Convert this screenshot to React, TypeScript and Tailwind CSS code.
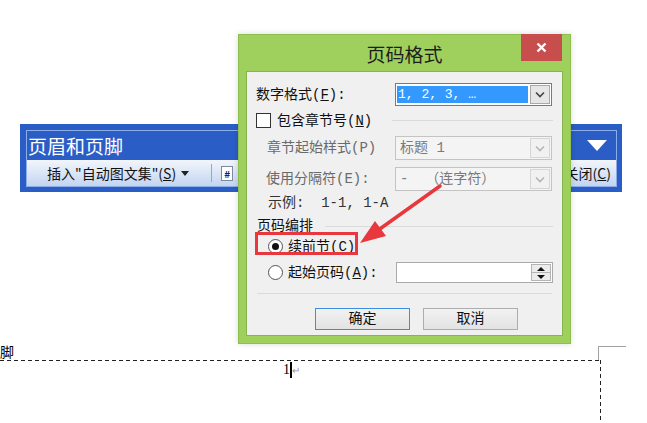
import React from "react";

const cjk = { fontFamily: '"Liberation Mono","Noto Sans CJK SC",monospace' };
const sans = { fontFamily: '"Noto Sans CJK SC","Noto Sans",sans-serif' };

function Chevron({ color = "#6b6b6b" }: { color?: string }) {
  return (
    <svg width="10" height="7" viewBox="0 0 10 7">
      <path d="M1 1.5 L5 5.5 L9 1.5" fill="none" stroke={color} strokeWidth="1.6" />
    </svg>
  );
}

function Select({
  children,
  active = false,
  h = 24,
}: {
  children?: React.ReactNode;
  active?: boolean;
  h?: number;
}) {
  return (
    <div
      className={`flex w-[157px] border ${active ? "border-[#7a7a7a] bg-white" : "border-[#c4c4c4] bg-[#f4f4f4]"}`}
      style={{ height: h }}
    >
      <div className="flex-1 flex items-center pl-[1px] pr-[2px] overflow-hidden">{children}</div>
      <div
        className={`w-[20px] my-[1px] mr-[1px] flex items-center justify-center border ${active ? "border-[#a9a9a9] bg-[#e6e6e6]" : "border-[#d6d6d6] bg-[#f1f1f1]"}`}
      >
        <Chevron color={active ? "#444" : "#b5b5b5"} />
      </div>
    </div>
  );
}

function Radio({ checked }: { checked?: boolean }) {
  return (
    <div className="w-[15px] h-[15px] rounded-full border border-[#555] bg-white flex items-center justify-center">
      {checked && <div className="w-[7px] h-[7px] rounded-full bg-[#111]" />}
    </div>
  );
}

export default function App() {
  return (
    <div className="relative w-[647px] h-[423px] overflow-hidden bg-white" style={sans}>
      {/* Toolbar */}
      <div className="mt-[124px] ml-[20px] w-[602px] h-[68px] bg-[#2b5dc7] pt-[6px] pl-[6px] pr-[5px] pb-[5px]">
        <div className="h-full border border-[#8eaeea] flex flex-col">
          <div className="h-[29px] flex items-center justify-between pl-[1px] pr-[9px]">
            <span className="text-white text-[19px] leading-none">页眉和页脚</span>
            <svg width="20" height="11" viewBox="0 0 20 11">
              <path d="M0 0 L20 0 L10 11 Z" fill="#ffffff" />
            </svg>
          </div>
          <div className="flex-1 flex items-center bg-gradient-to-b from-[#f2f6fc] to-[#c3d5f1] relative">
            <span className="ml-[20px] text-[14px] text-[#111] leading-none">
              插入"自动图文集"(<span className="underline">S</span>)
            </span>
            <svg className="ml-[5px]" width="8" height="5" viewBox="0 0 8 5">
              <path d="M0 0 L8 0 L4 5 Z" fill="#222" />
            </svg>
            <div className="ml-[22px] w-px h-[18px] bg-[#9aa7bb]" />
            <div className="ml-[9px] w-[12px] h-[15px] border border-[#7d8aa0] bg-white text-[10px] leading-[13px] text-[#224] font-bold text-center">
              #
            </div>
            <span className="ml-auto mr-[5px] text-[14px] text-[#111] leading-none">
              关闭(<span className="underline">C</span>)
            </span>
          </div>
        </div>
      </div>

      {/* Page */}
      <div className="mt-[153px] flex items-end h-[15px]">
        <span className="text-[14px] leading-none text-black" style={cjk}>
          脚
        </span>
        <div className="ml-auto mr-[21px] w-[28px] h-[14px] border-l border-t border-[#a0a0a0]" />
      </div>
      <div className="flex h-[70px]">
        <div className="w-[600px] flex flex-col">
          <div className="h-px bg-[repeating-linear-gradient(90deg,#222_0px,#222_4px,transparent_4px,transparent_7px)]" />
          <div className="pl-[283px] pt-[1px] flex items-center h-[16px]">
            <span className="text-[14px] leading-none text-black" style={{ fontFamily: '"Liberation Serif",serif' }}>
              1
            </span>
            <span className="inline-block w-[2px] h-[16px] bg-black" />
            <span className="text-[10px] text-[#999] leading-none">↵</span>
          </div>
        </div>
        <div className="w-px bg-[repeating-linear-gradient(180deg,#222_0px,#222_4px,transparent_4px,transparent_7px)]" />
      </div>

      {/* Dialog */}
      <div className="absolute left-[238px] top-[34px] w-[333px] h-[310px] bg-[#9fd05d] border border-[#8cbf4c] flex flex-col shadow-[0_0_6px_rgba(0,0,0,0.15)]">
        <div className="h-[36px] relative flex items-center justify-center">
          <span className="text-[19px] text-[#1d1d1d] leading-none" style={sans}>
            页码格式
          </span>
          <div className="absolute right-[8px] top-[-1px] w-[41px] h-[27px] bg-[#c84e4e] flex items-center justify-center">
            <svg width="11" height="11" viewBox="0 0 11 11">
              <path d="M1.5 1.5 L9.5 9.5 M9.5 1.5 L1.5 9.5" stroke="#fff" strokeWidth="2.4" />
            </svg>
          </div>
        </div>
        <div className="mx-[7px] mb-[7px] flex-1 bg-[#f0f0f0] border border-[#86b64a] text-[14px] leading-none" style={cjk}>
          {/* row 1 */}
          <div className="mt-[11px] ml-[9px] flex items-center h-[23px]">
            <span className="w-[139px] text-[#111]">
              数字格式(<span className="underline">F</span>):
            </span>
            <Select active h={23}>
              <div className="w-full h-[17px] bg-[#3399ff] text-white text-[13px] leading-[17px] pl-[1px] whitespace-pre">
                1, 2, 3, …
              </div>
            </Select>
          </div>
          {/* row 2 */}
          <div className="mt-[7px] ml-[9px] flex items-center h-[15px]">
            <div className="w-[15px] h-[15px] border border-[#333] bg-white" />
            <span className="ml-[6px] text-[#111]">
              包含章节号(<span className="underline">N</span>)
            </span>
            <div className="ml-auto mr-[9px] w-[161px] border-t border-[#dadada]" />
          </div>
          {/* row 3 */}
          <div className="mt-[8px] ml-[20px] flex items-center h-[24px]">
            <span className="w-[128px] text-[#6a6a6a]">章节起始样式(P)</span>
            <Select>
              <span className="pl-[3px] text-[#7a7a7a]">标题 1</span>
            </Select>
          </div>
          {/* row 4 */}
          <div className="mt-[7px] ml-[19px] flex items-center h-[24px]">
            <span className="w-[129px] text-[#6a6a6a]">使用分隔符(E):</span>
            <Select>
              <span className="pl-[3px] text-[#7a7a7a] whitespace-pre">-  （连字符）</span>
            </Select>
          </div>
          {/* row 5 */}
          <div className="mt-[5px] ml-[21px] h-[14px] flex items-center text-[#333] whitespace-pre">
            示例:  1-1, 1-A
          </div>
          {/* row 6 */}
          <div className="mt-[9px] ml-[10px] h-[14px] flex items-center">
            <span className="text-[#111]">页码编排</span>
            <div className="ml-[12px] mr-[9px] flex-1 border-t border-[#dadada]" />
          </div>
          {/* row 7 */}
          <div className="mt-[6px] ml-[21px] h-[15px] flex items-center">
            <Radio checked />
            <span className="ml-[5px] text-[#111]">续前节(C)</span>
          </div>
          {/* row 8 */}
          <div className="mt-[8px] ml-[21px] h-[21px] flex items-center">
            <Radio />
            <span className="ml-[5px] w-[108px] text-[#111]">
              起始页码(<span className="underline">A</span>):
            </span>
            <div className="w-[157px] h-[21px] border border-[#aaa] bg-white flex justify-end">
              <div className="w-[20px] my-[1px] mr-[1px] border border-[#b4b4b4] bg-[#ececec] flex flex-col">
                <div className="flex-1 flex items-center justify-center border-b border-[#b4b4b4]">
                  <svg width="8" height="4" viewBox="0 0 8 4">
                    <path d="M0 4 L8 4 L4 0 Z" fill="#111" />
                  </svg>
                </div>
                <div className="flex-1 flex items-center justify-center">
                  <svg width="8" height="4" viewBox="0 0 8 4">
                    <path d="M0 0 L8 0 L4 4 Z" fill="#111" />
                  </svg>
                </div>
              </div>
            </div>
          </div>
          {/* separator */}
          <div className="mt-[10px] mx-[10px] border-t border-[#dadada]" />
          {/* buttons */}
          <div className="mt-[14px] flex pl-[68px] gap-[13px]">
            <div className="w-[95px] h-[22px] border border-[#3c8fe0] bg-gradient-to-b from-[#f2f2f2] to-[#e3e3e3] flex items-center justify-center text-[#111]">
              确定
            </div>
            <div className="w-[95px] h-[22px] border border-[#adadad] bg-gradient-to-b from-[#f2f2f2] to-[#e3e3e3] flex items-center justify-center text-[#111]">
              取消
            </div>
          </div>
        </div>
      </div>

      {/* Red highlight box */}
      <div className="absolute left-[255px] top-[232px] w-[103px] h-[23px] border-[3px] border-[#e8383d]" />

      {/* Red arrow */}
      <svg className="absolute left-0 top-0" width="647" height="423" viewBox="0 0 647 423">
        <path d="M440 186 L377 231" stroke="#e8383d" strokeWidth="3.5" strokeLinecap="round" />
        <path d="M360 243 L386 236 L375 221 Z" fill="#e8383d" />
      </svg>
    </div>
  );
}
